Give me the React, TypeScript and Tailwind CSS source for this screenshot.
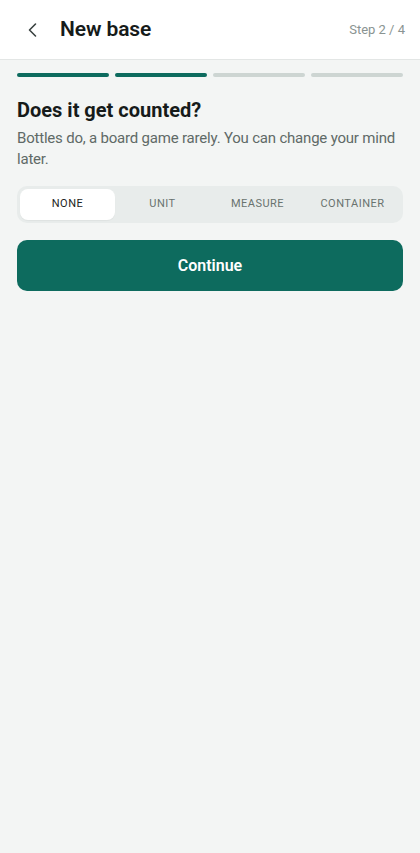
import { useState } from "react";

const STEPS = 4;
const CURRENT = 2;
const OPTIONS = ["None", "Unit", "Measure", "Container"] as const;

function BackIcon() {
  return (
    <svg width="24" height="24" viewBox="0 0 24 24" fill="none" stroke="currentColor" strokeWidth="1.6" strokeLinecap="round" strokeLinejoin="round">
      <path d="M14.5 6 8.5 12l6 6" />
    </svg>
  );
}

export default function App() {
  const [kind, setKind] = useState<(typeof OPTIONS)[number]>("None");

  return (
    <div className="min-h-[853px] bg-[#f3f5f4] font-['Roboto',sans-serif]">
      <header className="h-[60px] bg-white border-b border-[#e3e6e5] flex items-center pl-[21px] pr-[15px]">
        <button type="button" className="text-[#3a4240] w-6 h-6 flex items-center justify-center">
          <BackIcon />
        </button>
        <h1 className="ml-[15px] text-[21px] font-semibold text-[#161b1a] tracking-[-0.1px]">New base</h1>
        <span className="ml-auto text-[13px] text-[#8a9492]">Step 2 / 4</span>
      </header>

      <main className="px-[17px]">
        <div className="mt-[13px] grid grid-cols-4 gap-[6px]">
          {Array.from({ length: STEPS }).map((_, i) => (
            <div
              key={i}
              className={`h-[4px] rounded-full ${i < CURRENT ? "bg-[#0d6b5e]" : "bg-[#cdd5d2]"}`}
            />
          ))}
        </div>

        <h2 className="mt-[19px] text-[20px] leading-[28px] font-bold text-[#161b1a]">Does it get counted?</h2>
        <p className="mt-[4px] text-[15px] leading-[21px] tracking-[-0.2px] text-[#5f6a67]">
          Bottles do, a board game rarely. You can change your mind later.
        </p>

        <div className="mt-[16px] h-[37px] rounded-[10px] bg-[#e8eceb] p-[3px] grid grid-cols-4">
          {OPTIONS.map((o) => {
            const active = o === kind;
            return (
              <button
                key={o}
                type="button"
                onClick={() => setKind(o)}
                className={`rounded-[8px] text-[11px] uppercase tracking-[0.5px] ${
                  active ? "bg-white text-[#1d2422] shadow-[0_1px_1px_rgba(0,0,0,0.04)]" : "text-[#69736f]"
                }`}
              >
                {o}
              </button>
            );
          })}
        </div>

        <button
          type="button"
          className="mt-[17px] w-full h-[51px] rounded-[10px] bg-[#0d6b5e] text-white text-[16px] font-semibold"
        >
          Continue
        </button>
      </main>
    </div>
  );
}
